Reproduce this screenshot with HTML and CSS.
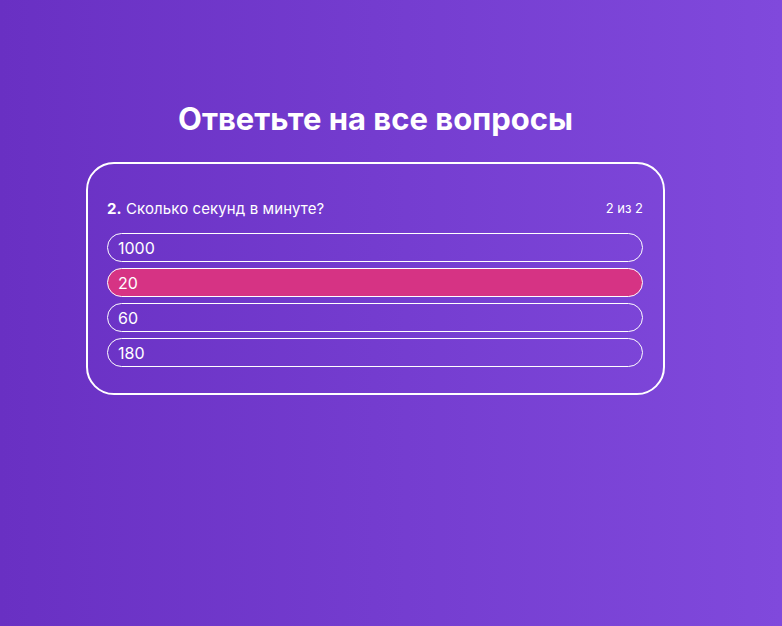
FILE: index.html
```html
<!DOCTYPE html>
<html lang="ru">
<head>
<meta charset="utf-8">
<link rel="stylesheet" href="styles.css">
</head>
<body>
<main class="page">
  <h1 class="title">Ответьте на все вопросы</h1>
  <section class="card">
    <div class="question-row">
      <div class="question"><b>2.</b> Сколько секунд в минуте?</div>
      <div class="counter">2 из 2</div>
    </div>
    <div class="options">
      <div class="option">1000</div>
      <div class="option selected">20</div>
      <div class="option">60</div>
      <div class="option">180</div>
    </div>
  </section>
</main>
</body>
</html>
```
FILE: styles.css
```css
html, body {
  margin: 0;
  height: 100%;
}
body {
  background: linear-gradient(90deg, #6930c3 0%, #8049dc 100%);
  font-family: Inter, "Noto Sans", sans-serif;
  color: #fff;
}
.page {
  padding: 100px 0 0 86px;
  width: 579px;
}
.title {
  margin: 0 0 24px;
  font-size: 31px;
  line-height: 38px;
  font-weight: 700;
  text-align: center;
}
.card {
  box-sizing: border-box;
  width: 579px;
  border: 2px solid #fff;
  border-radius: 28px;
  padding: 34px 20px 26px 19px;
}
.question-row {
  display: flex;
  justify-content: space-between;
  align-items: center;
  height: 20px;
  margin-bottom: 15px;
}
.question {
  font-size: 15px;
  letter-spacing: 0.1px;
}
.question b {
  font-weight: 700;
}
.counter {
  font-size: 13px;
}
.options {
  display: flex;
  flex-direction: column;
  gap: 6px;
}
.option {
  box-sizing: border-box;
  height: 29px;
  border: 1px solid #fff;
  border-radius: 15px;
  padding: 1px 10px 0;
  font-size: 16px;
  line-height: 27px;
}
.option.selected {
  background: #d63384;
}
```
